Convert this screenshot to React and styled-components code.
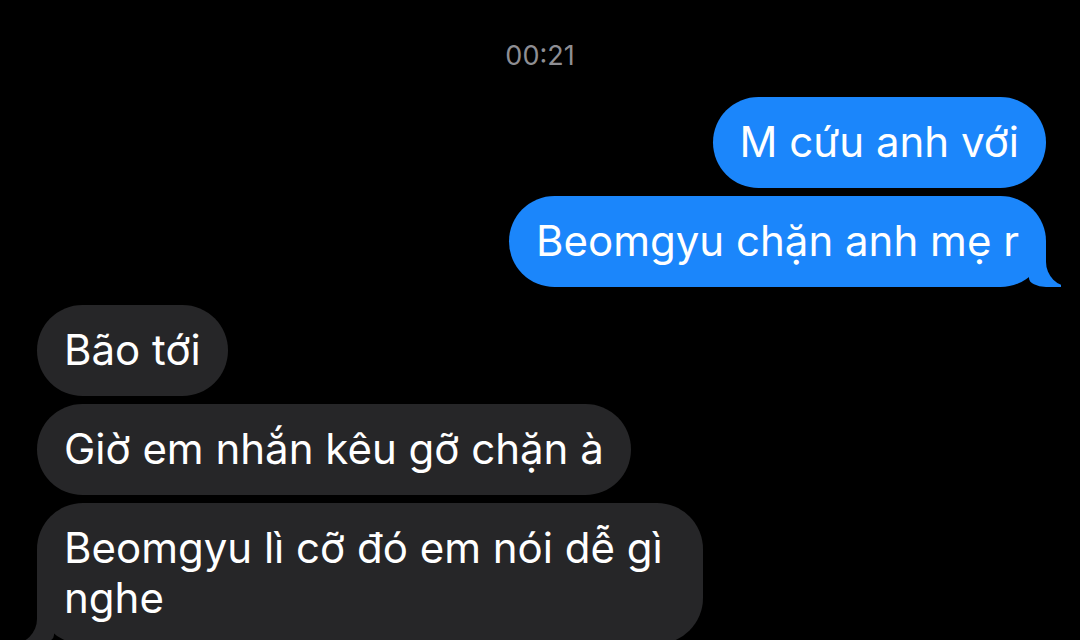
import React from "react";
import styled, { createGlobalStyle, css } from "styled-components";

const GlobalStyle = createGlobalStyle`
  html, body {
    margin: 0;
    padding: 0;
    background: #000;
  }
  body {
    font-family: Inter, "Noto Sans", "DejaVu Sans", sans-serif;
    -webkit-font-smoothing: antialiased;
  }
`;

const Screen = styled.div`
  width: 1080px;
  height: 640px;
  overflow: hidden;
  background: #000;
  display: flex;
  flex-direction: column;
  & > * {
    flex-shrink: 0;
  }
`;

const Timestamp = styled.div`
  height: 97px;
  box-sizing: border-box;
  padding-top: 40px;
  text-align: center;
  color: #8e8e93;
  font-size: 27px;
  line-height: 32px;
`;

const Group = styled.div`
  display: flex;
  flex-direction: column;
  gap: 8px;
  align-items: ${p => (p.mine ? "flex-end" : "flex-start")};
  padding: ${p => (p.mine ? "0 34px 0 0" : "0 0 0 37px")};
  margin-bottom: 18px;
`;

// iMessage style tail: a bubble-coloured block with a black block cutting the curve
const tailRight = css`
  &::before {
    content: "";
    position: absolute;
    bottom: 0;
    right: -15px;
    width: 32px;
    height: 46px;
    background: #1b86fb;
    border-bottom-left-radius: 17px 9px;
  }
  &::after {
    content: "";
    position: absolute;
    bottom: 0;
    right: -50px;
    width: 50px;
    height: 50px;
    background: #000;
    border-bottom-left-radius: 25px;
  }
`;

const tailLeft = css`
  &::before {
    content: "";
    position: absolute;
    bottom: 0;
    left: -15px;
    width: 32px;
    height: 46px;
    background: #262628;
    border-bottom-right-radius: 17px 9px;
  }
  &::after {
    content: "";
    position: absolute;
    bottom: 0;
    left: -50px;
    width: 50px;
    height: 50px;
    background: #000;
    border-bottom-right-radius: 25px;
  }
`;

const Bubble = styled.div`
  position: relative;
  box-sizing: border-box;
  padding: 20px 27px 21px;
  border-radius: 46px;
  font-size: 42px;
  line-height: 50px;
  color: #fff;
  background: ${p => (p.mine ? "#1b86fb" : "#262628")};
  width: ${p => p.width || "auto"};
  ${p => p.tail && (p.mine ? tailRight : tailLeft)}
`;

const BubbleText = styled.span`
  position: relative;
  z-index: 2;
`;

export default function App() {
  return (
    <Screen>
      <GlobalStyle />
      <Timestamp>00:21</Timestamp>
      <Group mine>
        <Bubble mine>
          <BubbleText>M cứu anh với</BubbleText>
        </Bubble>
        <Bubble mine tail>
          <BubbleText>Beomgyu chặn anh mẹ r</BubbleText>
        </Bubble>
      </Group>
      <Group>
        <Bubble>
          <BubbleText>Bão tới</BubbleText>
        </Bubble>
        <Bubble>
          <BubbleText>Giờ em nhắn kêu gỡ chặn à</BubbleText>
        </Bubble>
        <Bubble tail width="666px">
          <BubbleText>
            Beomgyu lì cỡ đó em nói dễ gì
            <br />
            nghe
          </BubbleText>
        </Bubble>
      </Group>
    </Screen>
  );
}
